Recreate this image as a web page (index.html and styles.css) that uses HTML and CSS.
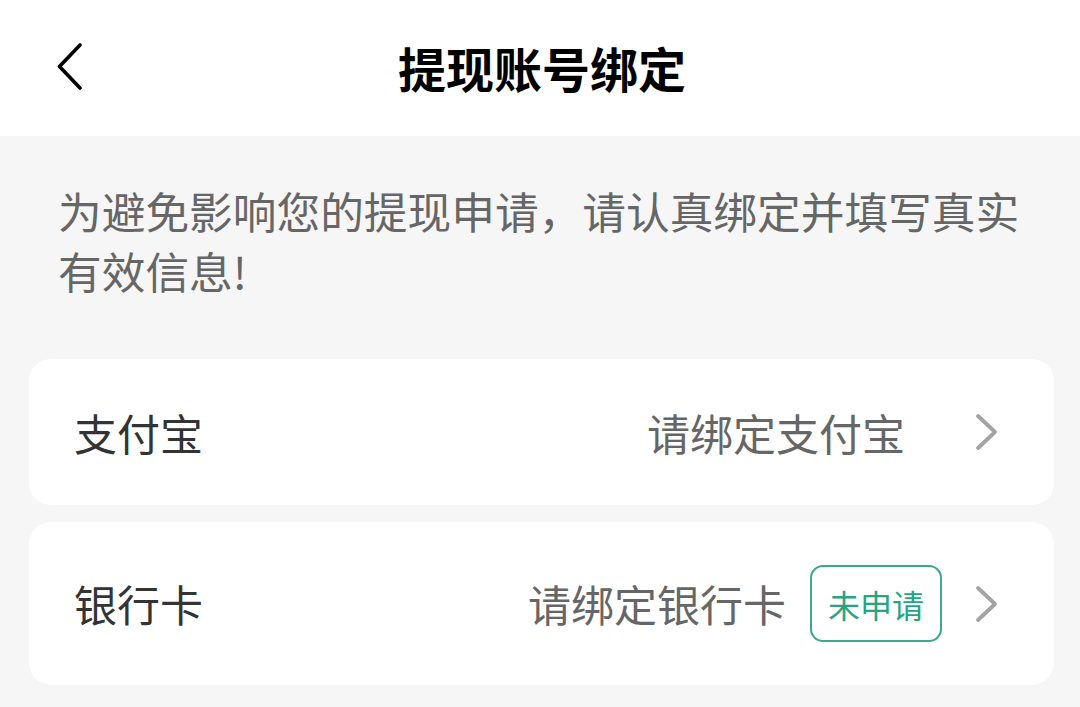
FILE: index.html
```html
<!DOCTYPE html>
<html lang="zh-CN">
<head>
<meta charset="utf-8">
<title>提现账号绑定</title>
<link rel="stylesheet" href="styles.css">
</head>
<body>
<header class="topbar">
  <div class="back">
    <svg width="28" height="48" viewBox="0 0 28 48"><path d="M24 2 L3.5 23.5 L24 45" fill="none" stroke="#000" stroke-width="3.6" stroke-linecap="round" stroke-linejoin="round"/></svg>
  </div>
  <h1 class="title">提现账号绑定</h1>
  <div></div>
</header>
<main class="content">
  <p class="notice">为避免影响您的提现申请，请认真绑定并填写真实有效信息!</p>
  <div class="card card-alipay">
    <span class="label">支付宝</span>
    <span class="value value-alipay">请绑定支付宝</span>
    <svg class="arrow" width="24" height="38" viewBox="0 0 24 38"><path d="M3 3 L20 19 L3 35" fill="none" stroke="#a3a3a3" stroke-width="3.8" stroke-linecap="round" stroke-linejoin="round"/></svg>
  </div>
  <div class="card card-bank">
    <span class="label">银行卡</span>
    <span class="value">请绑定银行卡</span>
    <span class="badge">未申请</span>
    <svg class="arrow" width="24" height="38" viewBox="0 0 24 38"><path d="M3 3 L20 19 L3 35" fill="none" stroke="#a3a3a3" stroke-width="3.8" stroke-linecap="round" stroke-linejoin="round"/></svg>
  </div>
</main>
</body>
</html>
```

FILE: styles.css
```css
html, body {
  margin: 0;
  padding: 0;
}
body {
  width: 1080px;
  height: 707px;
  overflow: hidden;
  background: #f6f6f6;
  font-family: "Noto Sans CJK SC", "Noto Sans", sans-serif;
}
.topbar {
  height: 136px;
  background: #fff;
  display: grid;
  grid-template-columns: 1fr auto 1fr;
  align-items: center;
}
.back {
  padding-left: 56px;
  display: flex;
  align-items: center;
  height: 48px;
  margin-top: -2px;
}
.title {
  margin: -2px 0 0 4px;
  font-size: 48px;
  font-weight: 700;
  color: #000;
  line-height: 1;
}
.content {
  padding: 0 26px 0 29px;
}
.notice {
  margin: 44px 0 59px 29px;
  font-size: 43.7px;
  line-height: 60px;
  color: #666;
}
.card {
  background: #fff;
  border-radius: 22px;
  display: flex;
  align-items: center;
  padding: 0 55px 0 45px;
  margin-bottom: 17px;
}
.card-alipay {
  height: 146px;
}
.card-bank {
  height: 163px;
}
.label {
  font-size: 43px;
  color: #333;
  flex: 1;
  line-height: 1;
}
.value {
  font-size: 43px;
  color: #666;
  line-height: 1;
}
.value-alipay {
  margin-right: 70px;
}
.badge {
  margin-left: 24px;
  margin-right: 33px;
  height: 77px;
  box-sizing: border-box;
  padding: 0 16px;
  border: 2px solid #3ba98a;
  border-radius: 13px;
  color: #27a580;
  font-size: 32px;
  display: flex;
  align-items: center;
}
.arrow {
  display: block;
}
```
